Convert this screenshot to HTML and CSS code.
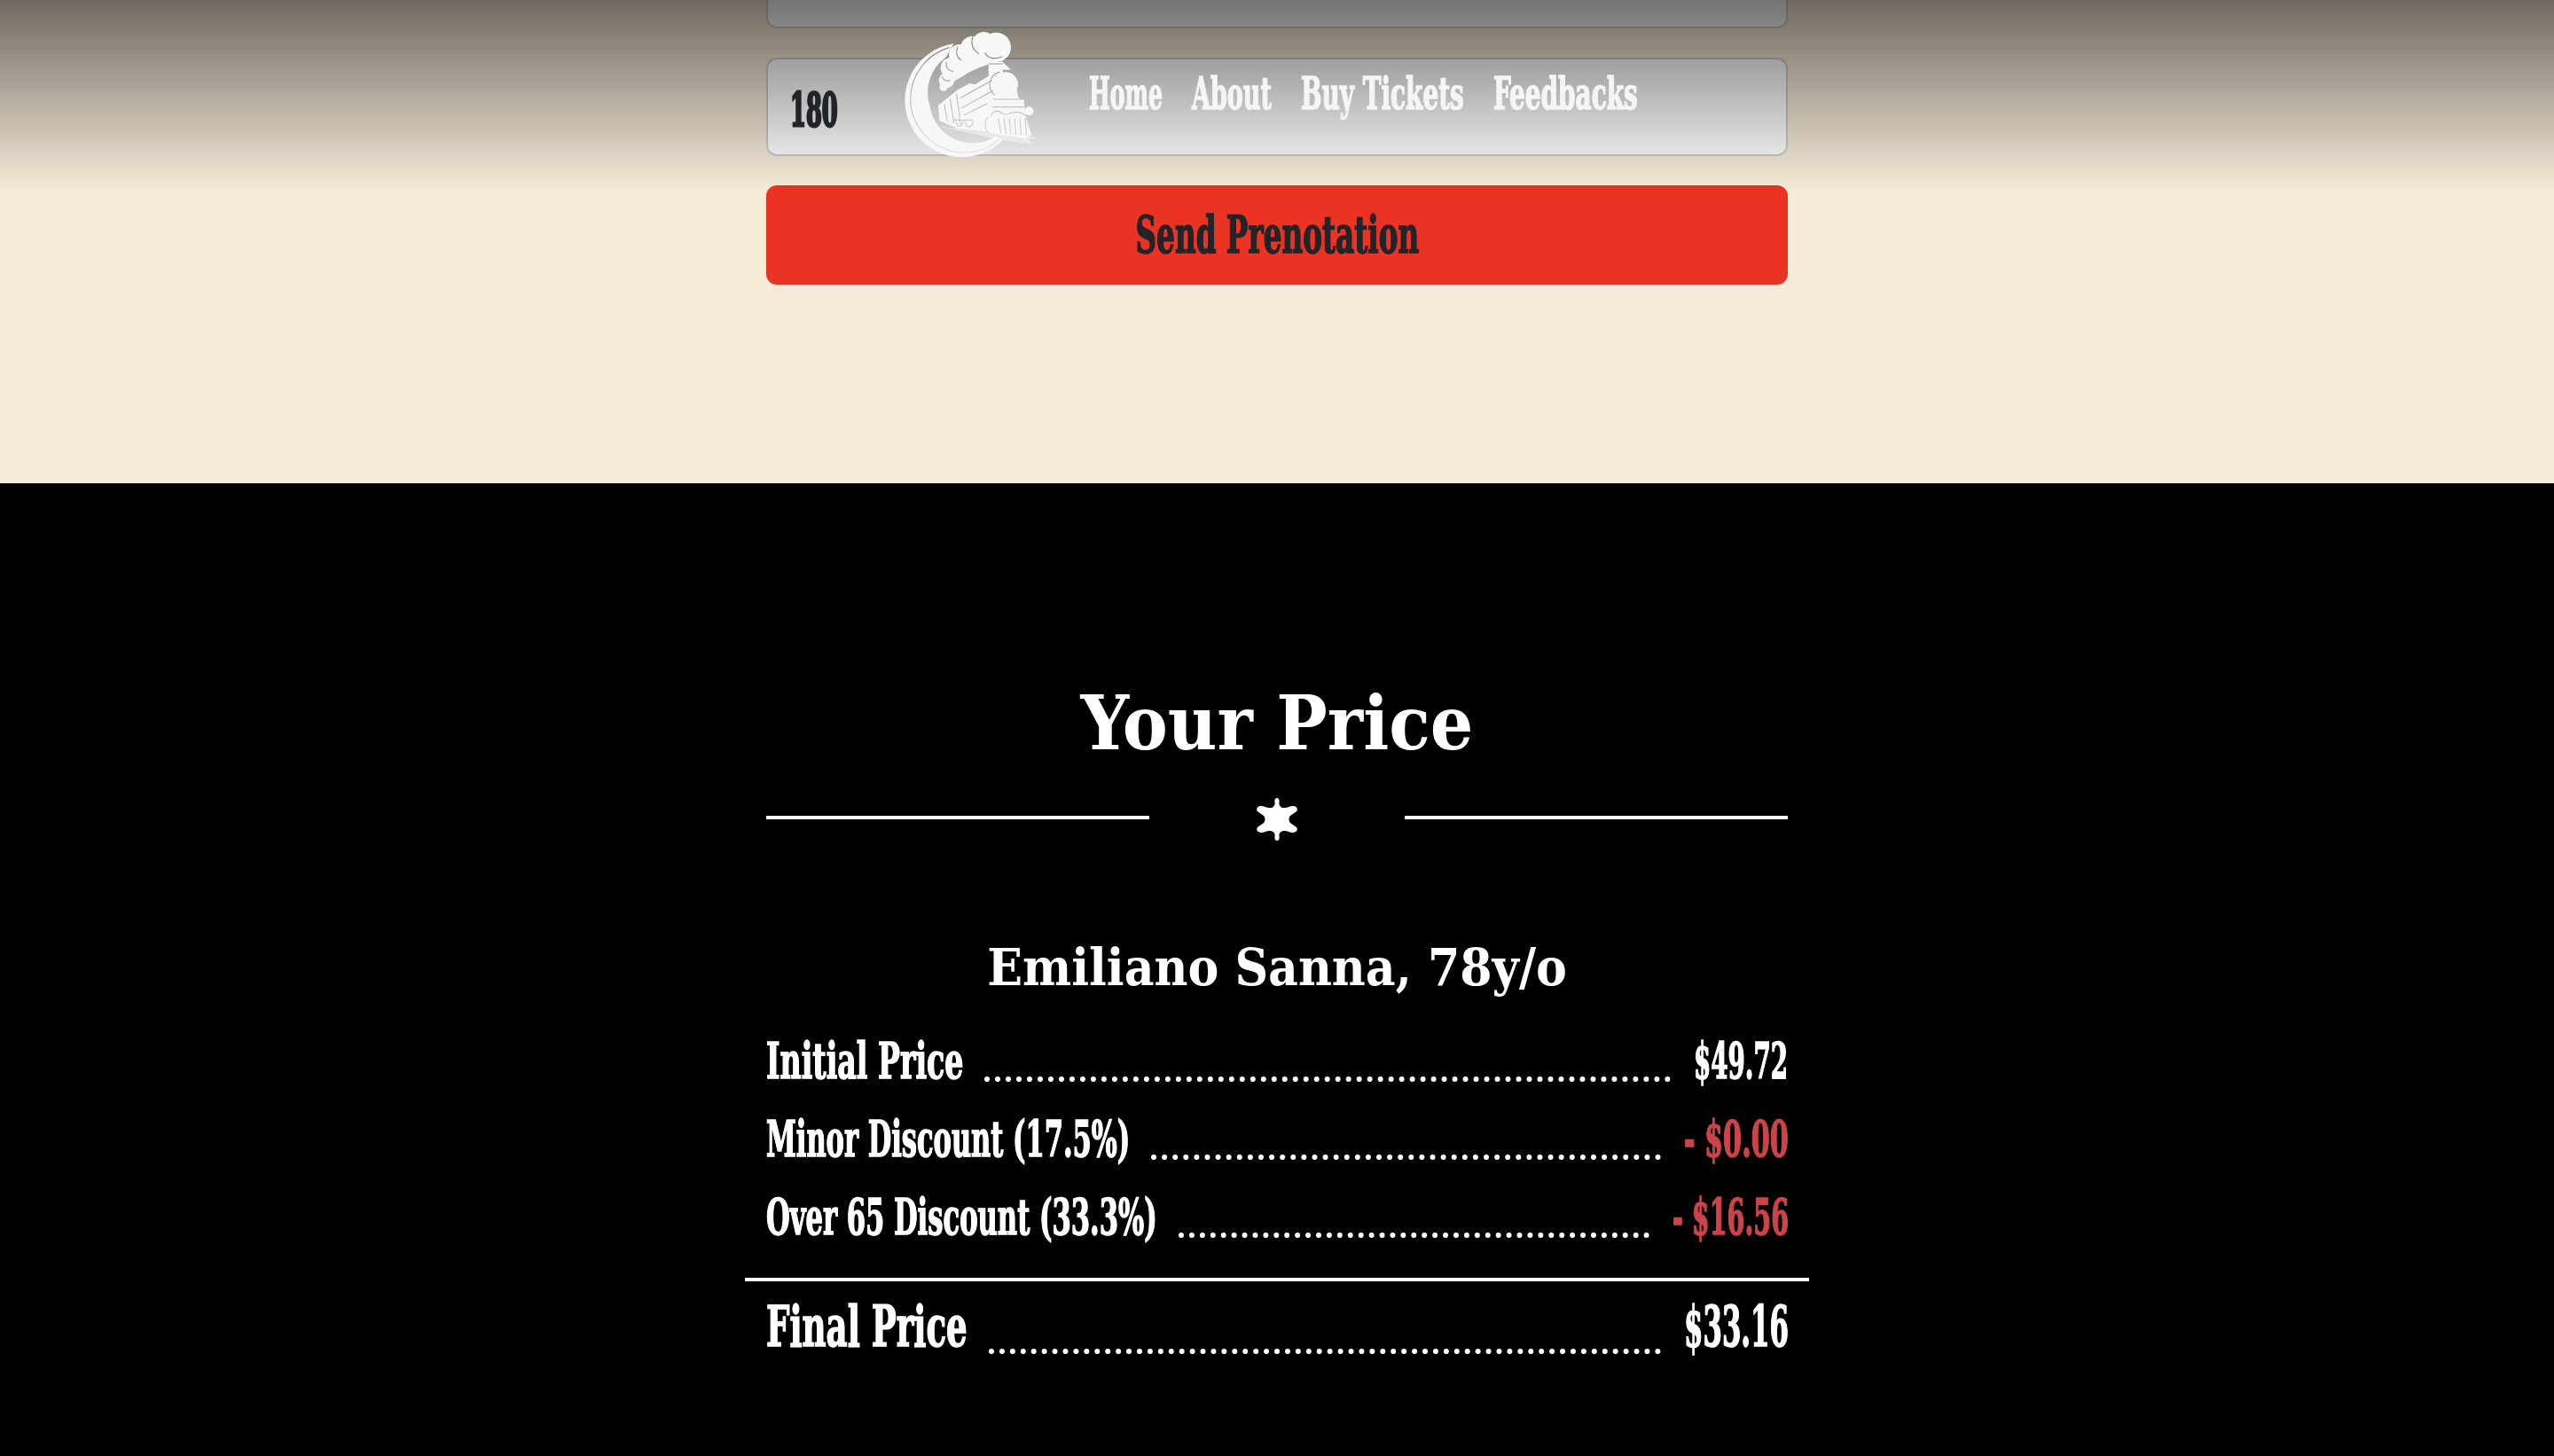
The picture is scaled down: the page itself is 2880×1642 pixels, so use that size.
FILE: index.html
```html
<!DOCTYPE html>
<html lang="en">
<head>
    <title>Buy Tickets</title>
    <meta charset="UTF-8">
    <link rel="stylesheet" href="styles.css">
</head>
<body>
    <header class="topbar">
        <nav class="nav">
            <svg class="logo" viewBox="0 0 660 510">
                <mask id="logo-cuts">
                    <rect width="660" height="510" fill="#fff"/>
                    <g fill="none" stroke="#000" stroke-width="3.5">
                        <!-- ring inner line -->
                        <path d="M272 100A184 184 0 0 0 140 272A184 184 0 0 0 320 456A184 184 0 0 0 440 412"/>
                        <!-- smoke lobes -->
                        <path d="M392 118C400 138 425 142 450 132M352 62C342 85 350 110 372 122M300 98C292 118 298 135 312 145M262 150C258 168 268 180 285 182M246 198C252 212 262 216 275 212"/>
                        <!-- boiler ring and cab -->
                        <path d="M426 262A44 44 0 0 1 442 184"/>
                        <path d="M254 292L266 352M274 274L288 358M296 258L310 362M308 272L415 212M312 306L420 246M320 330L400 290"/>
                        <path d="M420 276H520M418 302H524M412 332C425 306 445 318 456 326S500 304 526 330"/>
                        <path d="M438 340L446 392M456 340L463 394M474 340L480 395M492 340L497 397M510 340L515 398M528 340L533 399"/>
                        <path d="M288 346H352M318 350C312 374 300 374 294 350M352 350C348 376 330 376 324 350"/>
                        <path d="M402 336C386 356 392 384 412 396"/>
                        <path d="M404 156H452"/>
                    </g>
                </mask>
                <g class="logo-art" mask="url(#logo-cuts)">
                    <path d="M286 88A193 193 0 1 0 452 414L428 402A146 146 0 0 1 206 300A146 146 0 0 1 260 134Z"/>
                    <circle cx="430" cy="100" r="50"/><circle cx="388" cy="86" r="38"/><circle cx="350" cy="102" r="40"/>
                    <circle cx="306" cy="126" r="36"/><circle cx="278" cy="170" r="36"/><circle cx="262" cy="212" r="26"/>
                    <circle cx="252" cy="234" r="14"/>
                    <path d="M330 120L470 120 440 146 380 166 340 184 290 214 250 246 270 150Z"/>
                    <path d="M404 150H452V196H404Z"/>
                    <path d="M446 144L480 176H446Z"/>
                    <circle cx="462" cy="226" r="42"/>
                    <path d="M234 296L300 244 340 222 358 226 416 190 500 246 506 272 524 278 528 330 550 396 532 408 420 392 400 386 302 376 238 348Z"/>
                    <circle cx="541" cy="316" r="15"/>
                </g>
                <path d="M226 366L400 388 572 406 540 412 552 428 430 410Z" fill="#fff" fill-opacity="0.45"/>
            </svg>
            <a class="nav-link nav-home" href="#"><span class="fit">Home</span></a>
            <a class="nav-link nav-about" href="#"><span class="fit">About</span></a>
            <a class="nav-link nav-buy" href="#"><span class="fit">Buy Tickets</span></a>
            <a class="nav-link nav-feed" href="#"><span class="fit">Feedbacks</span></a>
        </nav>
    </header>

    <section class="prenotation">
        <div class="field field-cut"></div>
        <div class="field"><span class="fit field-value">180</span></div>
        <button class="send" type="button"><span class="fit send-text">Send Prenotation</span></button>
    </section>

    <section class="price">
        <h1 class="price-title">Your Price</h1>
        <div class="divider">
            <span class="divider-line"></span>
            <svg class="star" viewBox="0 0 46 48">
                <path d="M23 0C25 0 26 2 25.5 5C25 8 27 11 31 11C35 11 38 9 41 9C45 9 47 12 45 15C43 17 40 18 38 20C36 22 36 26 38 28C40 30 43 31 45 33C47 36 45 39 41 39C38 39 35 37 31 37C27 37 25 40 25.5 43C26 46 25 48 23 48C21 48 20 46 20.5 43C21 40 19 37 15 37C11 37 8 39 5 39C1 39 -1 36 1 33C3 31 6 30 8 28C10 26 10 22 8 20C6 18 3 17 1 15C-1 12 1 9 5 9C8 9 11 11 15 11C19 11 21 8 20.5 5C20 2 21 0 23 0Z" fill="#fff"/>
            </svg>
            <span class="divider-line"></span>
        </div>
        <h2 class="price-name">Emiliano Sanna, 78y/o</h2>
        <div class="rows">
            <div class="row">
                <span class="label label-initial"><span class="fit">Initial Price</span></span>
                <span class="dots"></span>
                <span class="amount amount-initial"><span class="fit">$49.72</span></span>
            </div>
            <div class="row">
                <span class="label label-minor"><span class="fit">Minor Discount (17.5%)</span></span>
                <span class="dots"></span>
                <span class="amount amount-minor discount"><span class="fit">- $0.00</span></span>
            </div>
            <div class="row">
                <span class="label label-over"><span class="fit">Over 65 Discount (33.3%)</span></span>
                <span class="dots"></span>
                <span class="amount amount-over discount"><span class="fit">- $16.56</span></span>
            </div>
        </div>
        <hr class="total-rule">
        <div class="row row-total">
            <span class="label label-final"><span class="fit">Final Price</span></span>
            <span class="dots"></span>
            <span class="amount amount-final"><span class="fit">$33.16</span></span>
        </div>
    </section>
</body>
</html>
```

FILE: styles.css
```css
body {
    margin: 0;
    background-color: #f6ebd8;
    font-family: "DejaVu Serif Condensed", "DejaVu Serif", serif;
    font-weight: 700;
    color: #fff;
}
.fit {
    display: inline-block;
    white-space: nowrap;
    transform-origin: left center;
    -webkit-text-stroke: 1.5px currentColor;
}

/* top bar */
.topbar {
    position: absolute;
    top: 0;
    left: 0;
    right: 0;
    height: 215px;
    background: linear-gradient(rgba(0, 0, 0, 0.55), rgba(0, 0, 0, 0));
}
.nav {
    display: flex;
    width: 1152px;
    margin: 0 auto;
    padding-top: 20px;
}
.logo {
    width: 220px;
    height: 170px;
    margin-left: 116px;
    margin-right: 28px;
}
.logo-art { fill: #f7f7f7; }
.nav-link {
    display: block;
    height: 50px;
    margin-top: 61px;
    margin-right: 33px;
    color: #f5f5f5;
    font-size: 50px;
    line-height: 50px;
    text-decoration: none;
}
.nav-home { width: 83px; }
.nav-about { width: 90px; }
.nav-buy { width: 184px; }
.nav-feed { width: 163px; }
.nav-home .fit { transform: scaleX(0.557); }
.nav-about .fit { transform: scaleX(0.6); }
.nav-buy .fit { transform: scaleX(0.62); }
.nav-feed .fit { transform: scaleX(0.62); }

/* form */
.prenotation {
    display: flex;
    flex-direction: column;
    box-sizing: border-box;
    width: 1152px;
    height: 545px;
    margin: 0 auto;
}
.field {
    box-sizing: border-box;
    height: 111px;
    padding-left: 25px;
    margin-bottom: 33px;
    background-color: #fff;
    border: 2px solid #c9cdd1;
    border-radius: 12px;
    color: #212529;
    font-size: 52px;
    line-height: 114px;
}
.field-cut {
    height: 32px;
    border-top: none;
    border-radius: 0 0 12px 12px;
}
.field-value {
    transform: scaleX(0.55);
    -webkit-text-stroke-width: 3px;
}
.send {
    height: 112px;
    padding: 0;
    background-color: #ea3323;
    border: none;
    border-radius: 12px;
    color: #212529;
    font-family: inherit;
    font-weight: 700;
    font-size: 58px;
    line-height: 112px;
}
.send-text {
    transform: scaleX(0.626);
    transform-origin: center;
}

/* price */
.price {
    background-color: #000;
    height: 1097px;
    box-sizing: border-box;
    padding-top: 220px;
    overflow: hidden;
}
.price-title {
    margin: 0;
    text-align: center;
    font-size: 85px;
    line-height: 100px;
}
.divider {
    display: flex;
    align-items: center;
    justify-content: space-between;
    width: 1152px;
    margin: 31px auto 0;
}
.divider-line {
    width: 432px;
    height: 4px;
    background-color: #fff;
}
.star {
    width: 46px;
    height: 48px;
    margin-top: 4px;
}
.price-name {
    margin: 108px 0 0;
    text-align: center;
    font-size: 58px;
    line-height: 70px;
}
.rows {
    width: 1152px;
    margin: 26px auto 0;
}
.row {
    display: flex;
    align-items: flex-end;
    width: 1152px;
    height: 88px;
    margin: 0 auto;
    font-size: 56px;
    line-height: 88px;
}
.dots {
    flex: 1;
    margin: 0 26px 20px 24px;
    border-bottom: 6px dotted #fff;
}
.label-initial { width: 222px; }
.label-minor { width: 410px; }
.label-over { width: 441px; }
.label-final { width: 227px; }
.amount-initial { width: 106px; }
.amount-minor { width: 117px; }
.amount-over { width: 130px; }
.amount-final { width: 117px; }
.label-initial .fit { transform: scaleX(0.659); }
.label-minor .fit { transform: scaleX(0.606); }
.label-over .fit { transform: scaleX(0.608); }
.label-final .fit { transform: scaleX(0.656); }
.amount-initial .fit { transform: scaleX(0.55); }
.amount-minor .fit { transform: scaleX(0.6); }
.amount-over .fit { transform: scaleX(0.567); }
.amount-final .fit { transform: scaleX(0.544); }
.discount { color: #cb444a; }
.total-rule {
    width: 1200px;
    height: 4px;
    margin: 25px auto 0;
    background-color: #fff;
    border: none;
}
.row-total {
    height: 102px;
    font-size: 63px;
    line-height: 102px;
}
```
